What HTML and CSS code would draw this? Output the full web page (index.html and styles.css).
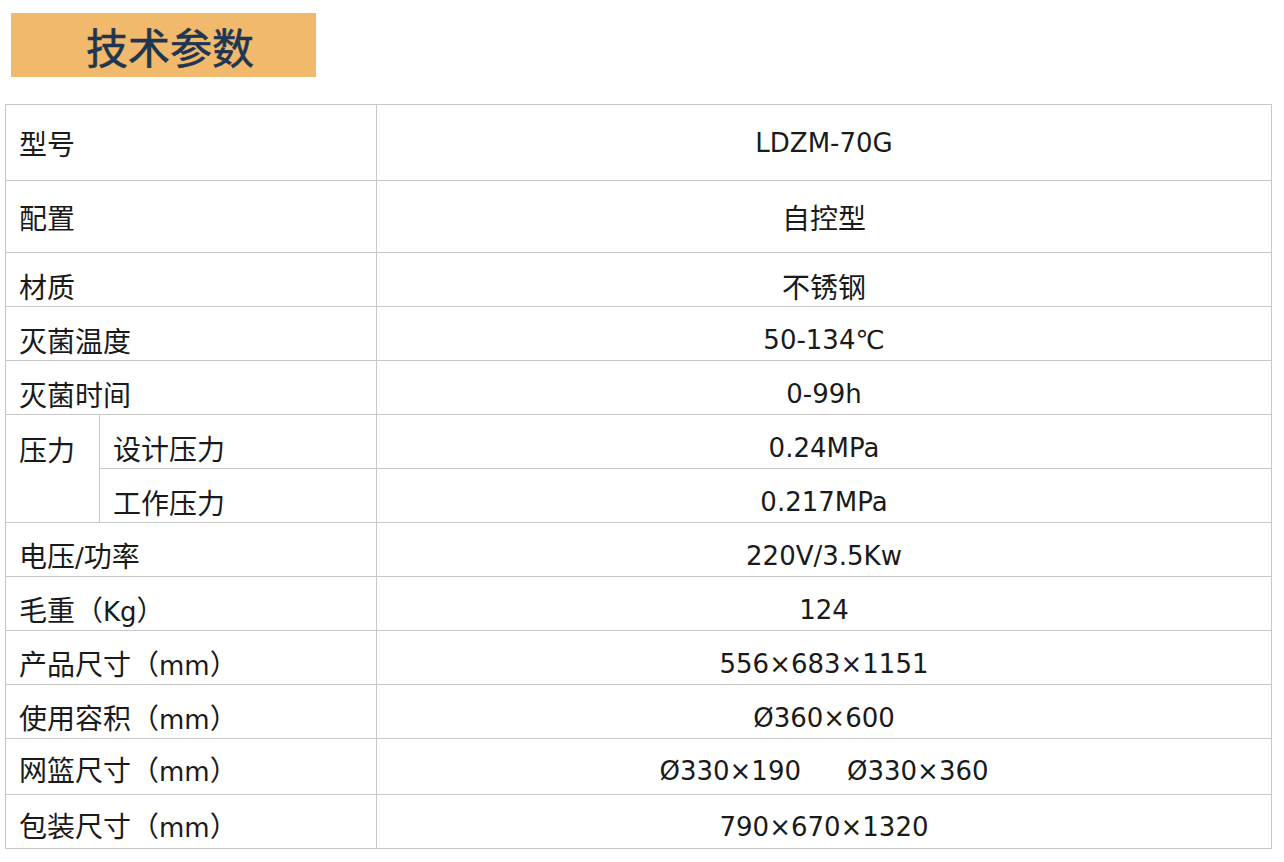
FILE: index.html
```html
<!DOCTYPE html>
<html lang="zh-CN">
<head>
<meta charset="utf-8">
<title>技术参数</title>
<link rel="stylesheet" href="styles.css">
</head>
<body>
<div class="page">
  <div class="title-box"><h1 class="title">技术参数</h1></div>
  <table class="spec">
    <colgroup>
      <col class="c-a"><col class="c-b"><col class="c-v">
    </colgroup>
    <tbody>
      <tr class="r-76"><td class="lbl tall" colspan="2">型号</td><td class="val tall">LDZM-70G</td></tr>
      <tr class="r-72"><td class="lbl tall" colspan="2">配置</td><td class="val cn tall">自控型</td></tr>
      <tr class="r-54"><td class="lbl" colspan="2">材质</td><td class="val cn">不锈钢</td></tr>
      <tr class="r-54"><td class="lbl" colspan="2">灭菌温度</td><td class="val">50-134℃</td></tr>
      <tr class="r-54"><td class="lbl" colspan="2">灭菌时间</td><td class="val">0-99h</td></tr>
      <tr class="r-54"><td class="lbl span" rowspan="2">压力</td><td class="lbl">设计压力</td><td class="val">0.24MPa</td></tr>
      <tr class="r-54"><td class="lbl">工作压力</td><td class="val">0.217MPa</td></tr>
      <tr class="r-54"><td class="lbl" colspan="2">电压<span class="en">/</span>功率</td><td class="val">220V/3.5Kw</td></tr>
      <tr class="r-54"><td class="lbl" colspan="2">毛重（<span class="en">Kg</span>）</td><td class="val">124</td></tr>
      <tr class="r-54"><td class="lbl" colspan="2">产品尺寸（<span class="en">mm</span>）</td><td class="val">556×683×1151</td></tr>
      <tr class="r-54"><td class="lbl" colspan="2">使用容积（<span class="en">mm</span>）</td><td class="val">Ø360×600</td></tr>
      <tr class="r-56"><td class="lbl mid" colspan="2">网篮尺寸（<span class="en">mm</span>）</td><td class="val mid"><span class="pair"><span>Ø330×190</span><span>Ø330×360</span></span></td></tr>
      <tr class="r-54"><td class="lbl low" colspan="2">包装尺寸（<span class="en">mm</span>）</td><td class="val low">790×670×1320</td></tr>
    </tbody>
  </table>
</div>
</body>
</html>
```

FILE: styles.css
```css
html, body {
  margin: 0;
  padding: 0;
  background: #ffffff;
}

.page {
  padding: 13px 13px 0 5px;
  font-family: "DejaVu Sans", "Noto Sans CJK SC", sans-serif;
  color: #1a1a1a;
}

.title-box {
  margin-left: 6px;
  width: 305px;
  height: 64px;
  background: #f0b96c;
  display: flex;
  align-items: center;
  justify-content: center;
}

.title {
  margin: 0;
  font-family: "Noto Sans CJK SC", sans-serif;
  font-weight: 400;
  font-size: 42px;
  letter-spacing: 0;
  line-height: 1;
  color: #1f3550;
  padding-top: 2px;
  padding-left: 13px;
  -webkit-text-stroke: 0.6px #1f3550;
}

.spec {
  margin-top: 27px;
  width: 1267px;
  border-collapse: collapse;
  table-layout: fixed;
}

.c-a { width: 94px; }
.c-b { width: 277px; }
.c-v { width: auto; }

.spec td {
  border: 1px solid #c8c8c8;
  line-height: 30px;
  padding: 13px 0 0 0;
  vertical-align: middle;
  white-space: nowrap;
}

.r-76 { height: 76px; }
.r-72 { height: 72px; }
.r-54 { height: 54px; }
.r-56 { height: 56px; }

.spec td.tall { padding-top: 0; }
.spec td.mid { padding-top: 8px; }
.spec td.low { padding-top: 10px; }

.lbl {
  font-family: "Noto Sans CJK SC", sans-serif;
  font-size: 28px;
  padding-left: 13px !important;
  text-align: left;
}

.en {
  font-family: "DejaVu Sans", sans-serif;
  font-size: 26px;
}

.val {
  text-align: center;
  font-family: "DejaVu Sans", "Noto Sans CJK SC", sans-serif;
  font-size: 26px;
}

.val.cn {
  font-family: "Noto Sans CJK SC", sans-serif;
  font-size: 28px;
}

.spec td.span {
  vertical-align: top;
  padding-top: 19px;
}

.pair {
  display: inline-flex;
  gap: 46px;
}
```
